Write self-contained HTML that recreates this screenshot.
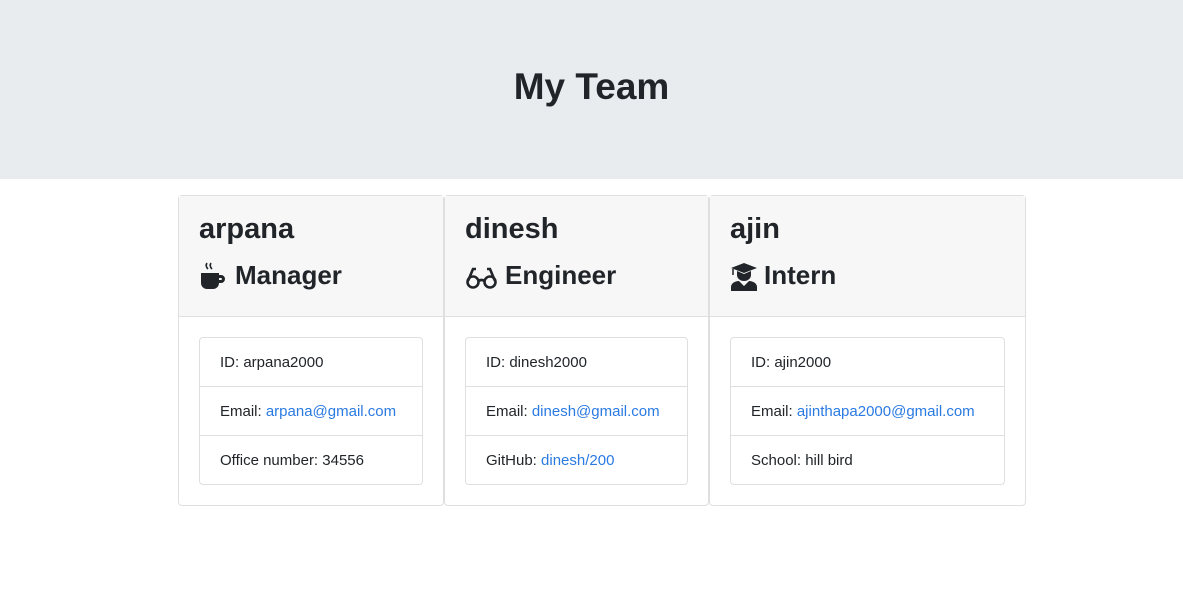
<!DOCTYPE html><html><head><style>
body{margin:0;font-family:"Liberation Sans",sans-serif;color:#212529;background:#fff;width:1183px;height:612px;overflow:hidden}
.jum{height:179px;background:#e9ecef;text-align:center}
.jum h1{margin:0;padding-top:63px;font-size:37px;font-weight:bold;line-height:48px}
.card{position:absolute;top:195px;border:1px solid #dfdfdf;border-radius:4px;box-sizing:border-box;height:311px}
.hd{height:121px;background:#f7f7f7;border-bottom:1px solid #dfdfdf;box-sizing:border-box}
.nm{font-size:29px;font-weight:bold;position:absolute;top:17px;left:20px}
.rl{font-size:26px;font-weight:bold;position:absolute;top:64px;left:20px;display:flex;align-items:center;gap:6px}
.lg{position:absolute;top:141px;left:20px;right:20px;border:1px solid #dfdfdf;border-radius:4px}
.lg div{height:48px;line-height:50px;padding-left:20px;font-size:15px;border-top:1px solid #dfdfdf}
.lg div:first-child{border-top:0}
a{color:#2a7ae2;text-decoration:none}
</style></head><body>
<div class="jum"><h1>My Team</h1></div>
<div class="card" style="left:178px;width:266px"><div class="hd"></div>
<div class="nm">arpana</div>
<div class="rl"><svg width="30" height="30" viewBox="0 0 30 30"><path d="M2 12h18v10a6 6 0 0 1-6 6H8a6 6 0 0 1-6-6z" fill="#212529"/><path d="M20 14h2a4 4 0 0 1 0 8h-2v-3h2a1 1 0 0 0 0-2h-2z" fill="#212529"/><path d="M8 2q-2 3 1 6M12 2q-2 3 1 6" stroke="#212529" stroke-width="1.6" fill="none"/></svg>Manager</div>
<div class="lg"><div>ID: arpana2000</div><div>Email: <a>arpana@gmail.com</a></div><div>Office number: 34556</div></div></div>
<div class="card" style="left:444px;width:265px"><div class="hd"></div>
<div class="nm">dinesh</div>
<div class="rl"><svg width="34" height="30" viewBox="0 0 34 30"><g stroke="#212529" stroke-width="2.6" fill="none"><circle cx="8" cy="21" r="5.5"/><circle cx="25" cy="21" r="5.5"/><path d="M13 20q3.5-2 7 0M3 20L8 8h3M30 20L25 8h-3"/></g></svg>Engineer</div>
<div class="lg"><div>ID: dinesh2000</div><div>Email: <a>dinesh@gmail.com</a></div><div>GitHub: <a>dinesh/200</a></div></div></div>
<div class="card" style="left:709px;width:317px"><div class="hd"></div>
<div class="nm">ajin</div>
<div class="rl"><svg width="28" height="30" viewBox="0 0 28 30"><path d="M1 7L14 2l13 5-13 5z" fill="#212529"/><path d="M3 8v6" stroke="#212529" stroke-width="1.5"/><path d="M7 10v4a7 6 0 0 0 14 0v-4l-7 3z" fill="#212529"/><path d="M1 30v-4a8 6 0 0 1 8-6l5 5 5-5a8 6 0 0 1 8 6v4z" fill="#212529"/></svg>Intern</div>
<div class="lg"><div>ID: ajin2000</div><div>Email: <a>ajinthapa2000@gmail.com</a></div><div>School: hill bird</div></div></div>
</body></html>
